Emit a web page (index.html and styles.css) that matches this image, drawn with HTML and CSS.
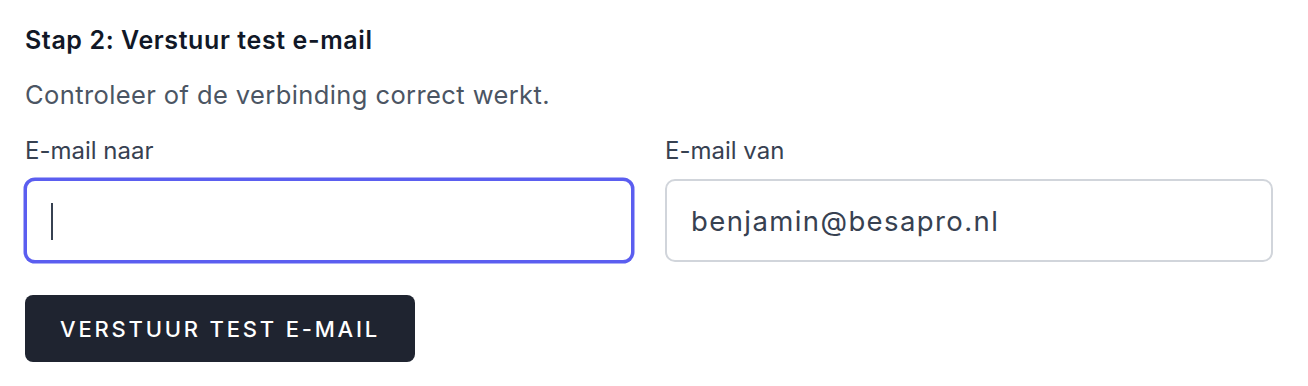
FILE: index.html
```html
<!DOCTYPE html>
<html lang="nl">
<head>
  <meta charset="UTF-8">
  <meta name="viewport" content="width=device-width, initial-scale=1.0">
  <title>Mail instellingen</title>
  <link rel="stylesheet" href="styles.css">
</head>
<body>

<!-- Stap 2 -->
<section class="step">
  <h3>Stap 2: Verstuur test e-mail</h3>
  <p class="help">Controleer of de verbinding correct werkt.</p>

  <div class="fields">
    <div class="field">
      <label for="mail-to">E-mail naar</label>
      <div class="input-wrap">
        <input type="email" id="mail-to" class="input focused">
        <span class="caret"></span>
      </div>
    </div>
    <div class="field">
      <label for="mail-from">E-mail van</label>
      <div class="input-wrap">
        <input type="email" id="mail-from" class="input" value="benjamin@besapro.nl">
      </div>
    </div>
  </div>

  <button class="send">Verstuur test e-mail</button>
</section>

</body>
</html>
```

FILE: styles.css
```css
/* Reset */
* {
  margin: 0;
  padding: 0;
  box-sizing: border-box;
  font-family: Inter, "Open Sans", sans-serif;
}

body {
  background: #fff;
  color: #111827;
}

/* Step block */
.step {
  padding: 22px 35px 0 25px;
}

.step h3 {
  font-size: 25px;
  font-weight: 600;
  letter-spacing: 0.6px;
  line-height: 36px;
  color: #111827;
}

.help {
  margin-top: 18px;
  font-size: 25.5px;
  letter-spacing: 0.4px;
  line-height: 38px;
  color: #4b5563;
}

/* Fields */
.fields {
  margin-top: 19px;
  display: grid;
  grid-template-columns: 1fr 1fr;
  gap: 32px;
}

.field label {
  display: block;
  font-size: 24px;
  line-height: 36px;
  color: #374151;
  margin-bottom: 10px;
}

.input-wrap {
  position: relative;
}

.input {
  display: block;
  width: 100%;
  height: 83px;
  padding: 0 24px;
  border: 2px solid #d1d5db;
  border-radius: 10px;
  font-size: 27.5px;
  letter-spacing: 1.4px;
  color: #374151;
  background: #fff;
  outline: none;
}

.input.focused {
  border-color: #5b5ef0;
  box-shadow: 0 0 0 1.5px #5b5ef0;
}

.caret {
  position: absolute;
  left: 26px;
  top: 24px;
  width: 2px;
  height: 37px;
  background: #374151;
}

/* Button */
.send {
  margin-top: 33px;
  height: 67px;
  padding: 0 35px;
  background: #1f2430;
  color: #fff;
  border: none;
  border-radius: 8px;
  font-size: 22px;
  font-weight: 500;
  letter-spacing: 2.8px;
  text-transform: uppercase;
  cursor: pointer;
}
```
